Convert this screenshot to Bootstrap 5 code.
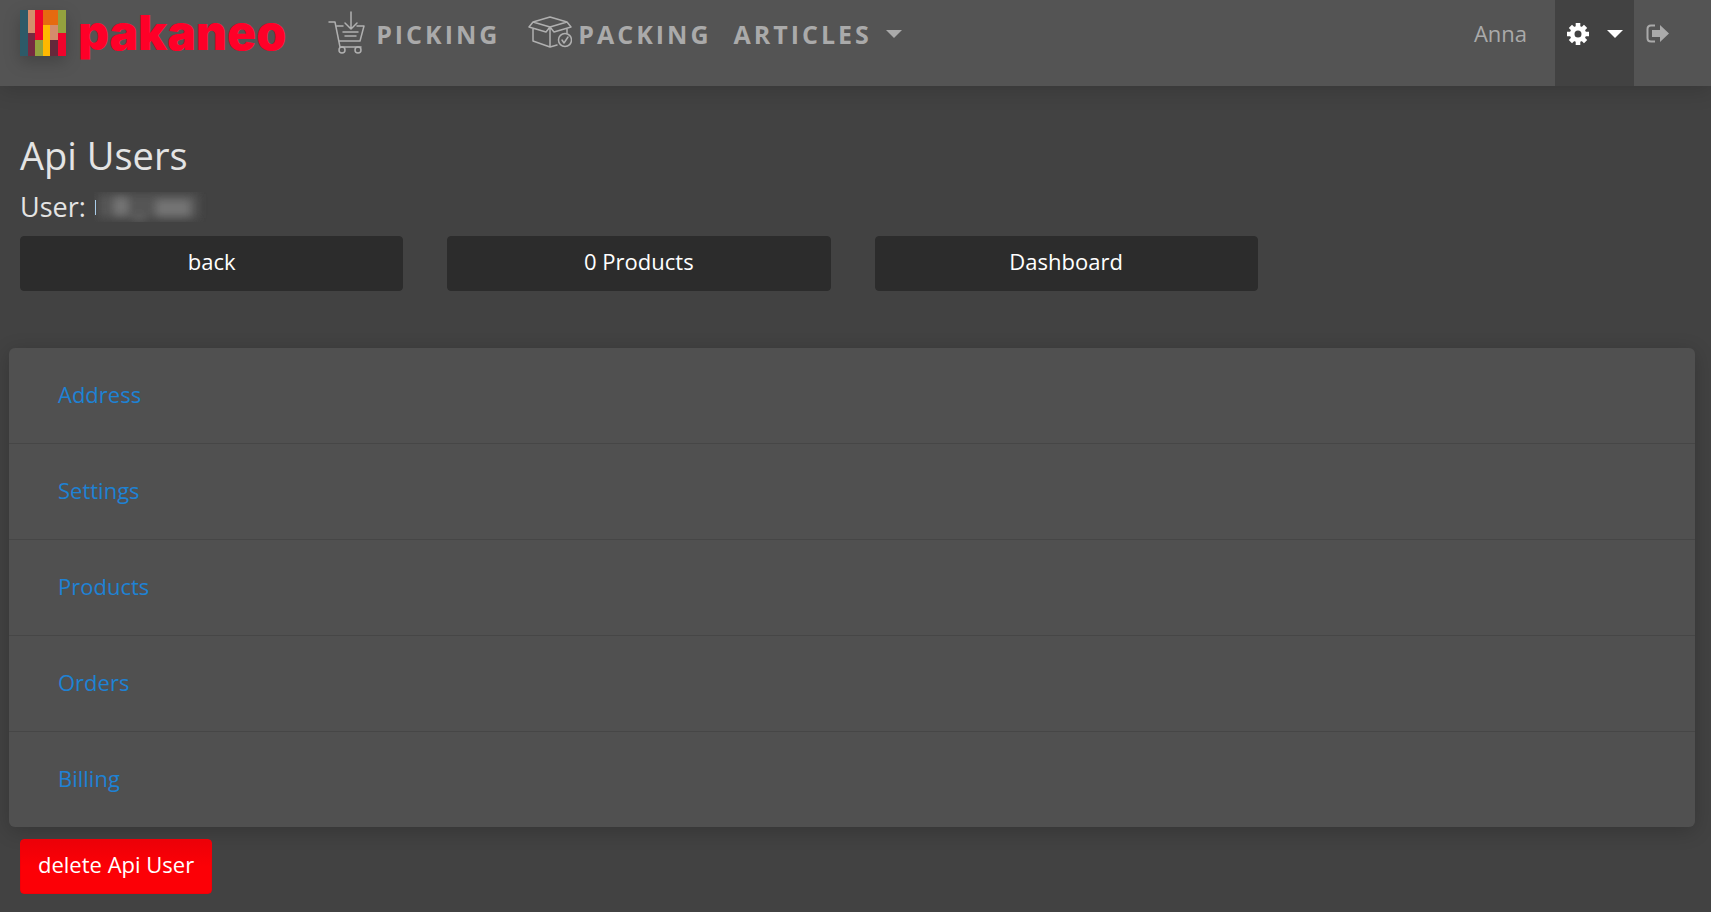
<!DOCTYPE html>
<html lang="en">
<head>
<meta charset="utf-8">
<meta name="viewport" content="width=device-width, initial-scale=1">
<title>Api Users</title>
<link href="https://cdn.jsdelivr.net/npm/bootstrap@5.3.0/dist/css/bootstrap.min.css" rel="stylesheet">
<style>
body{background:#424242;color:#e4e4e4;font-family:"Open Sans",sans-serif;font-size:22px;line-height:32px}
.topbar{background:#545454;min-height:86px;padding:0 42px 0 20px;box-shadow:0 4px 20px rgba(0,0,0,.16)}
.topbar a{color:#aaa;text-decoration:none}
.brand{gap:12px;height:66px;margin-right:42px}
.brand svg{filter:drop-shadow(0 6px 8px rgba(0,0,0,.2))}
.topbar .brand-name{font-family:Inter,sans-serif;font-weight:900;font-size:48px;line-height:48px;color:#ff0028}
.main-nav{gap:28px}
.main-link{height:68px;gap:10px;font-size:25px;font-weight:700;letter-spacing:3px}
.main-nav .link-packing{gap:6px}
.main-nav .main-menu{gap:14px;margin-left:-6px}
.caret{width:0;height:0;border:8px solid transparent;border-top-color:currentColor;border-bottom-width:0}
.tool{height:86px;padding-bottom:20px}
.topbar .tool-active{background:#424242;color:#fff;width:79px;border:0;gap:18px}
.topbar .tool-exit{padding-left:12px}
.line-icon{fill:none;stroke:#b0b0b0;stroke-width:1.5;stroke-linejoin:round;stroke-linecap:round}
.page-body{padding:44px 26px 0 20px}
h1{font-size:38px;line-height:50px;margin:0;font-weight:400}
h2{font-size:27px;line-height:38px;margin:0 0 10px;padding-top:8px;font-weight:400}
.actions{--bs-gutter-x:44px}
.btn-tall{--bs-btn-font-size:22px;--bs-btn-line-height:32px;--bs-btn-padding-x:17px;--bs-btn-border-radius:4px;--bs-btn-color:#fff;--bs-btn-hover-color:#fff;height:55px;padding-top:8px;padding-bottom:13px}
.btn-ink{--bs-btn-bg:#2c2c2c;--bs-btn-border-color:#2c2c2c;--bs-btn-hover-bg:#222}
.btn-delete{--bs-btn-border-color:#f00008;--bs-btn-hover-bg:#d00;background:linear-gradient(#ec0008,#fc0006 50%)}
.sections{margin:57px 16px 12px 9px;border-radius:6px;box-shadow:0 4px 20px rgba(0,0,0,.2);--bs-list-group-bg:#505050;--bs-list-group-border-color:#464646;--bs-list-group-item-padding-x:49px}
.sections .list-group-item{padding-top:30px;padding-bottom:33px}
.sections a{color:#1e82d4;text-decoration:none}
.delete-row{padding:0 20px 18px}
</style>
</head>
<body>
<nav class="navbar topbar d-flex flex-nowrap align-items-start">
  <a href="#" class="brand d-flex align-items-center">
    <svg class="flex-shrink-0" width="46" height="46" viewBox="0 0 46 46" shape-rendering="crispEdges" aria-hidden="true">
      <path fill="#2d5a68" d="M0 0h8v46H0z"/><path fill="#d48d6c" d="M8 0h7v23H8z"/><path fill="#762a40" d="M8 23h7v23H8z"/>
      <path fill="#f0042c" d="M15 0h8v30h-8z"/><path fill="#94a23e" d="M15 30h8v16h-8z"/><path fill="#e66a10" d="M23 0h15v15H23z"/>
      <path fill="#ffb800" d="M23 15h7v31h-7z"/><path fill="#d48d6c" d="M30 15h8v15h-8z"/><path fill="#65293b" d="M30 30h8v16h-8z"/>
      <path fill="#94a23e" d="M38 0h8v23h-8z"/><path fill="#f0042c" d="M38 23h8v23h-8z"/>
    </svg>
    <span class="brand-name">pakaneo</span>
  </a>
  <div class="main-nav d-flex flex-grow-1">
    <a href="#" class="main-link d-flex align-items-center">
      <svg class="line-icon mb-1" width="38" height="43" viewBox="0 0 38 43" aria-hidden="true"><path d="M1 11h6l5 25h21M9 15h6M29 15h7l-4 15H11M23 1v17M17 12l6 6 6-6M15 21h15M17 25h11"/><circle cx="14" cy="39" r="3"/><circle cx="30" cy="39" r="3"/></svg>
      PICKING</a>
    <a href="#" class="main-link link-packing d-flex align-items-center">
      <svg class="line-icon mb-1" width="44" height="32" viewBox="0 0 44 32" aria-hidden="true"><path d="M5 6 22 1l17 5-17 5zM5 6l-4 5 17 5 4-5M39 6l4 5-17 5-4-5M5 13v12l17 6V11M39 13v4M22 31l7-2"/><circle cx="37" cy="24" r="6.5"/><path d="m34 24 2 3 4-6"/></svg>
      PACKING</a>
    <a href="#" class="main-link main-menu d-flex align-items-center">ARTICLES<span class="caret"></span></a>
  </div>
  <div class="d-flex">
    <a href="#" class="tool d-flex align-items-center me-4 pe-1">Anna</a>
    <button type="button" class="tool tool-active d-flex align-items-center justify-content-center" aria-label="Settings">
      <svg width="22" height="22" viewBox="-11 -11 22 22" aria-hidden="true"><g fill="none" stroke="#fff"><circle r="5.8" stroke-width="4.6"/><path stroke-width="4.6" d="M0-11v4M0 7v4M-11 0h4M7 0h4M-7.6-7.6l2.8 2.8M4.8 4.8l2.8 2.8M-7.6 7.6l2.8-2.8M4.8-4.8l2.8-2.8"/></g></svg>
      <span class="caret"></span>
    </button>
    <a href="#" class="tool tool-exit d-flex align-items-center" aria-label="Sign out">
      <svg width="23" height="19" viewBox="0 0 23 19" aria-hidden="true"><path d="M9 1.5H5Q1.5 1.5 1.5 5v9Q1.5 17.5 5 17.5h4" fill="none" stroke="#aaa" stroke-width="2"/><path d="M6 6h8V1l9 8.5-9 8.5v-5H6z" fill="#aaa"/></svg>
    </a>
  </div>
</nav>
<main>
  <div class="page-body">
    <h1>Api Users</h1>
    <h2 class="d-flex align-items-center">User:
      <svg class="ms-2" width="124" height="30" viewBox="0 0 124 30" aria-hidden="true">
        <defs><filter id="soft" x="-20%" y="-40%" width="140%" height="180%"><feGaussianBlur stdDeviation="4"/></filter></defs>
        <g filter="url(#soft)"><path fill="#555" d="M4 2h100v24H4z"/><path fill="#747474" d="M20 5h14v19H20zM62 8h34v17H62zM38 25h14v3H38z"/></g>
        <path fill="#a9cdea" d="M1 8h1v15H1z"/>
      </svg>
    </h2>
    <div class="row actions">
      <div class="col-3"><button type="button" class="btn btn-tall btn-ink w-100">back</button></div>
      <div class="col-3"><button type="button" class="btn btn-tall btn-ink w-100">0 Products</button></div>
      <div class="col-3"><button type="button" class="btn btn-tall btn-ink w-100">Dashboard</button></div>
    </div>
  </div>
  <ul class="list-group list-group-flush sections">
    <li class="list-group-item"><a href="#">Address</a></li>
    <li class="list-group-item"><a href="#">Settings</a></li>
    <li class="list-group-item"><a href="#">Products</a></li>
    <li class="list-group-item"><a href="#">Orders</a></li>
    <li class="list-group-item"><a href="#">Billing</a></li>
  </ul>
  <div class="delete-row"><button type="button" class="btn btn-tall btn-delete">delete Api User</button></div>
</main>
<script src="https://cdn.jsdelivr.net/npm/bootstrap@5.3.0/dist/js/bootstrap.bundle.min.js"></script>
</body>
</html>
